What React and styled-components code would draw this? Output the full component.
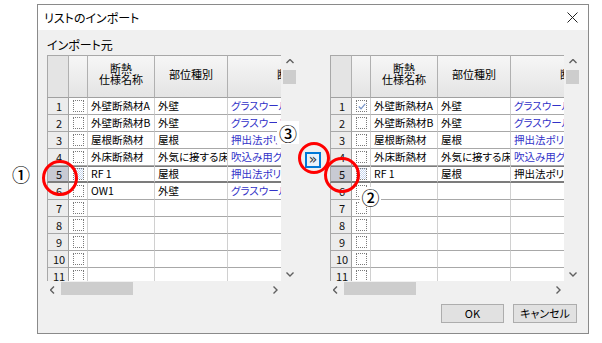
import styled, { createGlobalStyle } from "styled-components"

const GlobalStyle = createGlobalStyle`
html, body { margin:0; padding:0; background:#fff; }
body {
  font-family: "Noto Sans CJK JP", "Noto Sans", sans-serif;
  font-feature-settings: "palt";
  color:#000;
}
`;

const Page = styled.div`
position:relative;
width:602px;
height:343px;
box-sizing:border-box;
padding:4px 0 0 37px;
`;

const Dialog = styled.div`
width:552px;
height:330px;
box-sizing:border-box;
border:1px solid #8a8a8a;
background:#f0f0f0;
display:flex;
flex-direction:column;
`;

const TitleBar = styled.div`
height:25px;
background:#fff;
display:flex;
align-items:center;
justify-content:space-between;
padding:0 10px 0 6px;
font-size:12px;
`;

const Body = styled.div`
flex:1;
display:flex;
flex-direction:column;
padding:8px 6px 10px 9px;
`;

const Label = styled.div`
height:14px;
line-height:14px;
font-size:12px;
margin-bottom:3px;
`;

const Panels = styled.div`
display:flex;
`;

const Middle = styled.div`
width:32px;
padding:97px 0 0 7px;
box-sizing:border-box;
`;

const MoveButton = styled.div`
width:16px;
height:16px;
box-sizing:border-box;
border:2px solid #0078d7;
background:#e8f2fb;
font-family:"DejaVu Sans", sans-serif;
font-size:14px;
line-height:11px;
text-align:center;
color:#333;
overflow:hidden;
`;

const GridFrame = styled.div`
width:251px;
height:243px;
display:grid;
grid-template-columns:1fr 17px;
grid-template-rows:226px 17px;
`;

const Viewport = styled.div`
overflow:hidden;
background:#fff;
`;

const Table = styled.div`
display:grid;
grid-template-columns:22px 19px 67px 73px 132px;
grid-template-rows:43px;
grid-auto-rows:17px;
width:313px;
`;

const HeadCell = styled.div`
box-sizing:border-box;
border-top:1px solid #a8a8a8;
border-bottom:1px solid #a0a0a0;
border-right:1px solid #b0b0b0;
border-left:${p => p.$first ? "1px solid #a8a8a8" : "none"};
background:${p => p.$first ? "#e4e4e4" : "linear-gradient(#f6f6f6, #e4e4e4)"};
display:flex;
align-items:center;
justify-content:center;
text-align:center;
font-size:11px;
line-height:11px;
padding-bottom:5px;
white-space:pre-line;
overflow:hidden;
`;

const NumCell = styled.div`
box-sizing:border-box;
border-left:1px solid #a8a8a8;
border-right:1px solid #a0a0a0;
border-bottom:${p => p.$sel ? "2px solid #7c7c7c" : "1px solid #a8a8a8"};
box-shadow:${p => p.$sel ? "inset 0 1px 0 #7c7c7c" : "none"};
background:${p => p.$sel ? "#c8cad3" : "#ececec"};
font-size:11px;
line-height:16px;
text-align:center;
padding-left:2px;
color:#111;
`;

const Cell = styled.div`
box-sizing:border-box;
border-right:1px solid #d0d0d0;
border-bottom:${p => p.$sel ? "2px solid #7c7c7c" : "1px solid #a8a8a8"};
box-shadow:${p => p.$sel ? "inset 0 1px 0 #7c7c7c" : "none"};
padding-left:3px;
font-size:10.5px;
line-height:16px;
white-space:nowrap;
overflow:hidden;
color:${p => p.$blue ? "#3232c8" : "#000"};
display:${p => p.$center ? "flex" : "block"};
align-items:center;
justify-content:center;
`;

const CheckBox = styled.div`
width:11px;
height:12px;
box-sizing:border-box;
border:1px dotted #7a7a7a;
margin-right:2px;
background:${p => p.$sel
  ? "repeating-conic-gradient(#c6d6ee 0 25%, #ffffff 0 50%) 0 0/2px 2px"
  : "#fff"};
display:flex;
align-items:center;
justify-content:center;
`;

const VScroll = styled.div`
background:#f0f0f0;
position:relative;
display:flex;
flex-direction:column;
align-items:center;
justify-content:space-between;
padding:4px 0;
box-sizing:border-box;
`;

const VThumb = styled.div`
position:absolute;
left:2px;
top:15px;
width:13px;
height:14px;
background:#cdcdcd;
`;

const HScroll = styled.div`
background:#f0f0f0;
position:relative;
display:flex;
align-items:center;
justify-content:space-between;
padding:0 3px;
box-sizing:border-box;
`;

const HThumb = styled.div`
position:absolute;
left:14px;
top:1px;
width:72px;
height:13px;
background:#cdcdcd;
`;

const Corner = styled.div`
background:#f0f0f0;
`;

const Footer = styled.div`
display:flex;
justify-content:flex-end;
gap:9px;
margin-top:6px;
padding-right:5px;
`;

const Button = styled.div`
width:${p => p.$w}px;
height:19px;
box-sizing:border-box;
border:1px solid #adadad;
background:#e1e1e1;
font-size:11px;
line-height:17px;
text-align:center;
`;

const Ring = styled.div`
position:absolute;
box-sizing:border-box;
border:3px solid #ff0000;
border-radius:50%;
pointer-events:none;
`;

const Mark = styled.div`
position:absolute;
background:${p => p.$box ? "#fff" : "transparent"};
font-size:18px;
font-weight:500;
line-height:1;
display:flex;
align-items:center;
justify-content:center;
`;

const Chev = ({ dir }) => {
  const pts = {
    up: "0,4 3.5,0.5 7,4",
    down: "0,0.5 3.5,4 7,0.5",
    left: "4,0 0.5,3.5 4,7",
    right: "0.5,0 4,3.5 0.5,7",
  }[dir]
  const vert = dir === "up" || dir === "down"
  return (
    <svg width={vert ? 8 : 5} height={vert ? 5 : 8} viewBox={vert ? "0 0 7 5" : "0 0 5 7"} style={{ zIndex: 1 }}>
      <polyline points={pts} fill="none" stroke="#606060" strokeWidth="1.4" />
    </svg>
  )
}

const leftRows = [
  ["外壁断熱材A", "外壁", "グラスウール", true],
  ["外壁断熱材B", "外壁", "グラスウール", true],
  ["屋根断熱材", "屋根", "押出法ポリスチレン", true],
  ["外床断熱材", "外気に接する床", "吹込み用グラスウール", true],
  ["RF 1", "屋根", "押出法ポリスチレン", true],
  ["OW1", "外壁", "グラスウール", true],
]

const rightRows = [
  ["外壁断熱材A", "外壁", "グラスウール", true],
  ["外壁断熱材B", "外壁", "グラスウール", true],
  ["屋根断熱材", "屋根", "押出法ポリスチレン", true],
  ["外床断熱材", "外気に接する床", "吹込み用グラスウール", true],
  ["RF 1", "屋根", "押出法ポリスチレン", false],
]

const Grid = ({ rows, checked = [] }) => {
  const list = Array.from({ length: 11 }, (_, i) => rows[i] || ["", "", "", false])
  return (
    <GridFrame>
      <Viewport>
        <Table>
          <HeadCell $first />
          <HeadCell />
          <HeadCell>{"断熱\n仕様名称"}</HeadCell>
          <HeadCell>部位種別</HeadCell>
          <HeadCell>断熱材</HeadCell>
          {list.map((r, i) => {
            const sel = i === 4
            return [
              <NumCell key={"n" + i} $sel={sel}>{i + 1}</NumCell>,
              <Cell key={"c" + i} $sel={sel} $center>
                <CheckBox $sel={sel}>
                  {checked.includes(i) && (
                    <svg width="8" height="7" viewBox="0 0 8 7">
                      <polyline points="0.8,3.5 3,5.8 7.2,0.8" fill="none" stroke="#7895c8" strokeWidth="1.3" />
                    </svg>
                  )}
                </CheckBox>
              </Cell>,
              <Cell key={"a" + i} $sel={sel}>{r[0]}</Cell>,
              <Cell key={"b" + i} $sel={sel}>{r[1]}</Cell>,
              <Cell key={"d" + i} $sel={sel} $blue={r[3]}>{r[2]}</Cell>,
            ]
          })}
        </Table>
      </Viewport>
      <VScroll>
        <Chev dir="up" />
        <VThumb />
        <Chev dir="down" />
      </VScroll>
      <HScroll>
        <Chev dir="left" />
        <HThumb />
        <Chev dir="right" />
      </HScroll>
      <Corner />
    </GridFrame>
  )
}

const App = () => {
  return (
    <Page>
      <GlobalStyle />
      <Dialog>
        <TitleBar>
          <span>リストのインポート</span>
          <svg width="11" height="11" viewBox="0 0 11 11">
            <path d="M0.5 0.5 L10.5 10.5 M10.5 0.5 L0.5 10.5" stroke="#222" strokeWidth="1" />
          </svg>
        </TitleBar>
        <Body>
          <Label>インポート元</Label>
          <Panels>
            <Grid rows={leftRows} />
            <Middle>
              <MoveButton>»</MoveButton>
            </Middle>
            <Grid rows={rightRows} checked={[0]} />
          </Panels>
          <Footer>
            <Button $w={63}>OK</Button>
            <Button $w={64}>キャンセル</Button>
          </Footer>
        </Body>
      </Dialog>

      <Ring style={{ left: 42, top: 160, width: 36, height: 36 }} />
      <Ring style={{ left: 298, top: 142, width: 32, height: 32 }} />
      <Ring style={{ left: 324, top: 157, width: 36, height: 36 }} />
      <Mark style={{ left: 11, top: 164, width: 20, height: 20 }}>①</Mark>
      <Mark $box style={{ left: 277, top: 121, width: 22, height: 23 }}>③</Mark>
      <Mark $box style={{ left: 360, top: 187, width: 21, height: 19 }}>②</Mark>
    </Page>
  )
}

export default App
